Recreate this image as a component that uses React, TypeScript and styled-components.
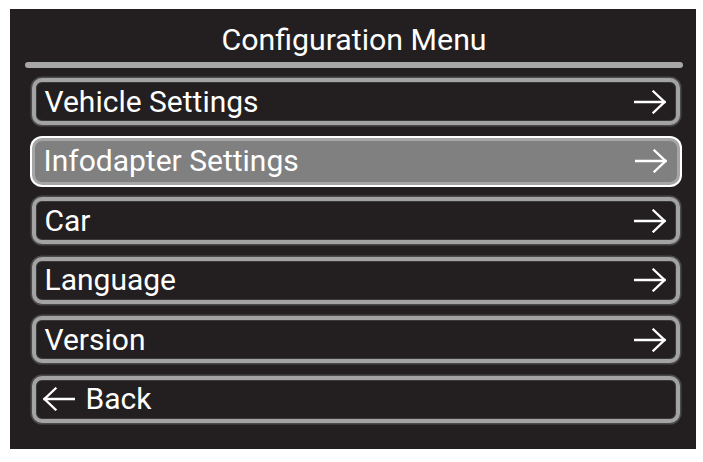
import React from "react";
import styled, { createGlobalStyle } from "styled-components";

const Global = createGlobalStyle`
  html, body { margin: 0; padding: 0; background: #ffffff; }
  body { font-family: Roboto, "Liberation Sans", Arial, sans-serif; }
`;

const Page = styled.div`
  width: 703px;
  height: 462px;
  padding: 9px 0 0 10px;
  box-sizing: border-box;
`;

const Panel = styled.div`
  width: 686px;
  height: 440px;
  background: #231f20;
  display: flex;
  flex-direction: column;
  box-sizing: border-box;
  padding: 0 13px 0 15px;
`;

const Title = styled.div`
  height: 53px;
  display: flex;
  align-items: center;
  justify-content: center;
  color: #ffffff;
  font-size: 30.3px;
  padding-top: 8px;
  box-sizing: border-box;
`;

const Separator = styled.div`
  height: 6px;
  border-radius: 3px;
  background: #a7a7a7;
`;

const List = styled.div`
  display: flex;
  flex-direction: column;
  gap: 12.6px;
  padding: 10px 3px 0 6.5px;
`;

const Button = styled.div<{ $active?: boolean }>`
  height: 47px;
  box-sizing: border-box;
  border-radius: 10px;
  border: ${(p) => (p.$active ? "3.5px solid #a6a6a6" : "4px solid #a3a3a3")};
  box-shadow: ${(p) =>
    p.$active
      ? "0 0 0 2px #ffffff"
      : "0 0 0 1.5px #4a4a4a, inset 0 0 0 1px #3a3a3a"};
  background: ${(p) => (p.$active ? "#808081" : "#231f20")};
  display: flex;
  align-items: center;
  justify-content: space-between;
  padding: 0 10px 0 9px;
  color: #ffffff;
  font-size: 30px;
`;

const Label = styled.span`
  display: flex;
  align-items: center;
  gap: 11px;
  line-height: 1;
`;

const BackIcon = styled.span`
  display: flex;
  margin-left: -2px;
`;

const Arrow = ({ left }: { left?: boolean }) => (
  <svg
    width="32"
    height="24"
    viewBox="0 0 32 24"
    fill="none"
    stroke="#ffffff"
    strokeWidth="2.3"
    strokeLinecap="square"
    style={left ? { transform: "scaleX(-1)" } : undefined}
  >
    <line x1="1" y1="12" x2="30.5" y2="12" />
    <polyline points="19.5,1.5 30.5,12 19.5,22.5" strokeLinejoin="miter" />
  </svg>
);

const items = [
  "Vehicle Settings",
  "Infodapter Settings",
  "Car",
  "Language",
  "Version",
];

export default function App() {
  return (
    <>
      <Global />
      <Page>
        <Panel>
          <Title>Configuration Menu</Title>
          <Separator />
          <List>
            {items.map((t, i) => (
              <Button key={t} $active={i === 1}>
                <Label>{t}</Label>
                <Arrow />
              </Button>
            ))}
            <Button>
              <Label>
                <BackIcon>
                  <Arrow left />
                </BackIcon>
                Back
              </Label>
            </Button>
          </List>
        </Panel>
      </Page>
    </>
  );
}
